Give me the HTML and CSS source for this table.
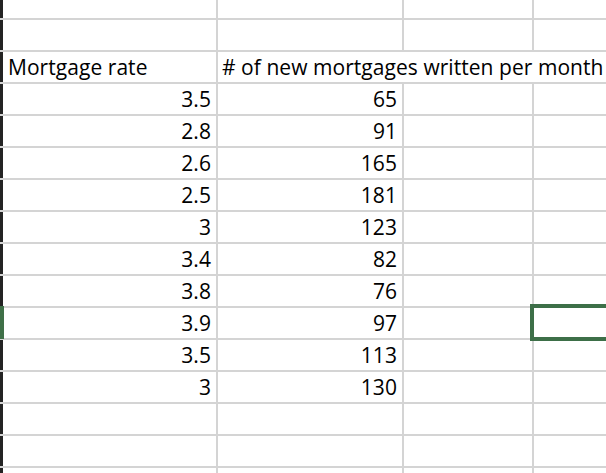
FILE: index.html
```html
<!DOCTYPE html>
<html>
<head>
<meta charset="utf-8">
<link rel="stylesheet" href="styles.css">
</head>
<body>
<div class="sheet">
  <div class="cell a"></div><div class="cell"></div><div class="cell"></div><div class="cell"></div>
  <div class="cell a"></div><div class="cell"></div><div class="cell"></div><div class="cell"></div>
  <div class="cell a txt">Mortgage rate</div><div class="cell txt wide">#&nbsp;of new mortgages written per month</div>
  <div class="cell a num">3.5</div><div class="cell num">65</div><div class="cell"></div><div class="cell"></div>
  <div class="cell a num">2.8</div><div class="cell num">91</div><div class="cell"></div><div class="cell"></div>
  <div class="cell a num">2.6</div><div class="cell num">165</div><div class="cell"></div><div class="cell"></div>
  <div class="cell a num">2.5</div><div class="cell num">181</div><div class="cell"></div><div class="cell"></div>
  <div class="cell a num">3</div><div class="cell num">123</div><div class="cell"></div><div class="cell"></div>
  <div class="cell a num">3.4</div><div class="cell num">82</div><div class="cell"></div><div class="cell"></div>
  <div class="cell a num">3.8</div><div class="cell num">76</div><div class="cell"></div><div class="cell"></div>
  <div class="cell a num sel-row">3.9</div><div class="cell num">97</div><div class="cell"></div><div class="cell selected"></div>
  <div class="cell a num">3.5</div><div class="cell num">113</div><div class="cell"></div><div class="cell"></div>
  <div class="cell a num">3</div><div class="cell num">130</div><div class="cell"></div><div class="cell"></div>
  <div class="cell a"></div><div class="cell"></div><div class="cell"></div><div class="cell"></div>
  <div class="cell a"></div><div class="cell"></div><div class="cell"></div><div class="cell"></div>
  <div class="cell a"></div><div class="cell"></div><div class="cell"></div><div class="cell"></div>
</div>
</body>
</html>
```
FILE: styles.css
```css
html, body {
  margin: 0;
  padding: 0;
  background: #ffffff;
}
body {
  width: 606px;
  height: 473px;
  overflow: hidden;
}
.sheet {
  display: grid;
  grid-template-columns: 216px 184px 128px 72px;
  grid-auto-rows: 30px;
  gap: 2px;
  background: #d4d4d4;
  width: 606px;
  margin-top: -12px;
  font-family: "Open Sans", Lato, sans-serif;
  font-size: 21px;
  letter-spacing: 0.05px;
  color: #000000;
}
.cell {
  background: #ffffff;
  position: relative;
  display: flex;
  align-items: flex-end;
  line-height: 22px;
  padding-bottom: 4px;
  box-sizing: border-box;
  white-space: nowrap;
}
.a {
  border-left: 3px solid #232323;
}
.txt {
  padding-left: 5px;
}
.wide {
  grid-column: span 3;
  padding-left: 4px;
  overflow: hidden;
}
.num {
  justify-content: flex-end;
  padding-right: 5px;
}
.sel-row::before {
  content: "";
  position: absolute;
  left: -3px;
  top: -2px;
  bottom: -1px;
  width: 4px;
  background: #3f7048;
}
.selected {
  z-index: 2;
}
.selected::after {
  content: "";
  position: absolute;
  left: -4px;
  top: -4px;
  bottom: -3px;
  right: -12px;
  border: 4px solid #3d6f48;
}
```
